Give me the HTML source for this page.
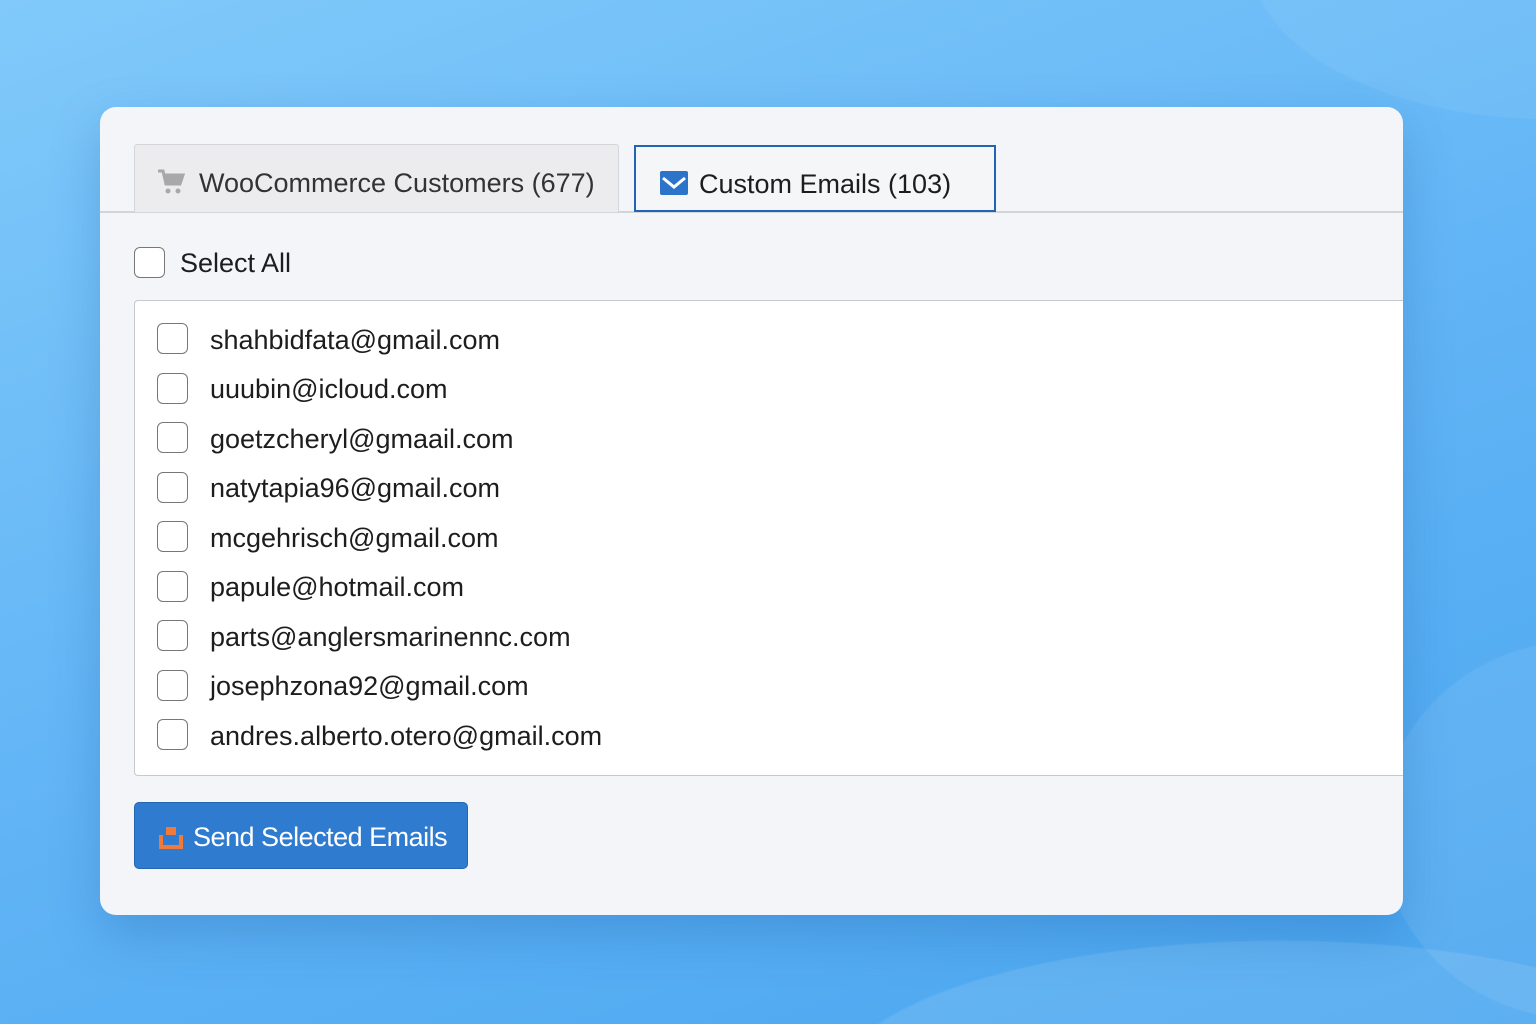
<!DOCTYPE html>
<html><head><meta charset="utf-8"><style>
*{box-sizing:border-box;margin:0;padding:0}
html,body{width:1536px;height:1024px;overflow:hidden}
body{font-family:"Liberation Sans",sans-serif;position:relative;background:
radial-gradient(ellipse 300px 160px at 1550px -40px,rgba(255,255,255,0.06) 99%,transparent 100%),
radial-gradient(ellipse 450px 150px at 1280px 1090px,rgba(255,255,255,0.1) 99%,transparent 100%),
radial-gradient(ellipse 200px 190px at 1580px 830px,rgba(255,255,255,0.08) 99%,transparent 100%),
linear-gradient(160deg,#80c9fa 0%,#62b5f6 50%,#4aa6ef 100%)}
.card{position:absolute;left:100px;top:107px;width:1303px;height:808px;background:#f3f5f8;border-radius:16px;box-shadow:0 20px 50px rgba(20,80,150,0.25);overflow:hidden}
.line{position:absolute;left:0;right:0;top:104px;height:2px;background:#d2d5da}
.tab1{position:absolute;left:34px;top:37px;width:485px;height:68px;background:#ececef;border:1px solid #d4d6da;border-bottom:none;border-radius:3px 3px 0 0;font-size:27px;color:#333;padding:23px 0 0 64px}
.tab2{position:absolute;left:534px;top:38px;width:362px;height:67px;background:#f5f6f8;border:2px solid #1f64b5;font-size:27px;color:#1d1d1d;padding:22px 0 0 63px}
.cb{position:absolute;width:31px;height:31px;border:1.5px solid #777;border-radius:6px;background:#fff}
.list{position:absolute;left:34px;top:193px;width:1269px;height:476px;background:#fff;border:1.5px solid #c5c8cc;border-right:none;border-radius:4px 0 0 4px}
.item{position:absolute;left:75px;font-size:27px;color:#1d1d1d}
.btn{position:absolute;left:34px;top:695px;width:334px;height:67px;background:#2f7bd0;border-radius:5px;border:1px solid #2466b0;color:#fff;font-size:27px;padding:19px 0 0 58px;letter-spacing:-0.5px}
</style></head><body>
<div class="card">
<div class="line"></div>
<div class="tab1"><svg style="position:absolute;left:22px;top:24px" width="28" height="26" viewBox="0 0 28 26"><path d="M1 2h5l3 13h14l3-9H8" fill="none" stroke="#a8a8a8" stroke-width="3"/><path d="M8 7h18l-3 8H10z" fill="#a8a8a8"/><circle cx="11" cy="22" r="2.5" fill="#a8a8a8"/><circle cx="21" cy="22" r="2.5" fill="#a8a8a8"/></svg>WooCommerce Customers (677)</div>
<div class="tab2"><svg style="position:absolute;left:24px;top:24px" width="28" height="24" viewBox="0 0 28 24"><rect x="0" y="0" width="28" height="24" rx="2" fill="#2b74c9"/><path d="M3 7l11 9 11-9" fill="none" stroke="#fff" stroke-width="3"/></svg>Custom Emails (103)</div>
<div class="cb" style="left:34px;top:140px"></div>
<div style="position:absolute;left:80px;top:141px;font-size:27px;color:#1d1d1d">Select All</div>
<div class="list">
<div class="cb" style="left:22px;top:22px"></div><div class="item" style="top:24px">shahbidfata@gmail.com</div>
<div class="cb" style="left:22px;top:72px"></div><div class="item" style="top:73px">uuubin@icloud.com</div>
<div class="cb" style="left:22px;top:121px"></div><div class="item" style="top:123px">goetzcheryl@gmaail.com</div>
<div class="cb" style="left:22px;top:171px"></div><div class="item" style="top:172px">natytapia96@gmail.com</div>
<div class="cb" style="left:22px;top:220px"></div><div class="item" style="top:222px">mcgehrisch@gmail.com</div>
<div class="cb" style="left:22px;top:270px"></div><div class="item" style="top:271px">papule@hotmail.com</div>
<div class="cb" style="left:22px;top:319px"></div><div class="item" style="top:321px">parts@anglersmarinennc.com</div>
<div class="cb" style="left:22px;top:369px"></div><div class="item" style="top:370px">josephzona92@gmail.com</div>
<div class="cb" style="left:22px;top:418px"></div><div class="item" style="top:420px">andres.alberto.otero@gmail.com</div>
</div>
<div class="btn"><svg style="position:absolute;left:24px;top:24px" width="24" height="22" viewBox="0 0 24 22"><rect x="7" y="0" width="10" height="8" fill="#f07a3a"/><path d="M2 8v12h20V8" fill="none" stroke="#f07a3a" stroke-width="4"/></svg>Send Selected Emails</div>
</div>
</body></html>
